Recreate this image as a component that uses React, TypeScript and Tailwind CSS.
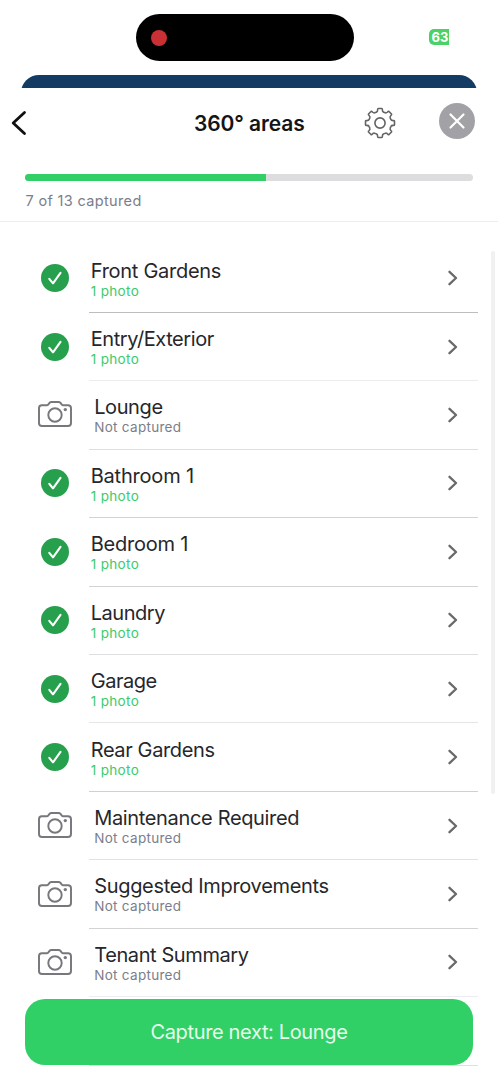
import React from "react";

type Area = { name: string; done: boolean; tracking: string; line: string };

const areas: Area[] = [
  { name: "Front Gardens", done: true, tracking: "tracking-[-0.28px]", line: "bg-[#bdbdbf]" },
  { name: "Entry/Exterior", done: true, tracking: "tracking-[-0.42px]", line: "bg-[#ececee]" },
  { name: "Lounge", done: false, tracking: "tracking-[-0.4px]", line: "bg-[#dedee0]" },
  { name: "Bathroom 1", done: true, tracking: "tracking-[-0.2px]", line: "bg-[#d3d3d5]" },
  { name: "Bedroom 1", done: true, tracking: "tracking-[-0.23px]", line: "bg-[#d3d3d5]" },
  { name: "Laundry", done: true, tracking: "tracking-[-0.45px]", line: "bg-[#dedee0]" },
  { name: "Garage", done: true, tracking: "tracking-[-0.45px]", line: "bg-[#e6e6e8]" },
  { name: "Rear Gardens", done: true, tracking: "tracking-[-0.38px]", line: "bg-[#d0d0d2]" },
  { name: "Maintenance Required", done: false, tracking: "tracking-[-0.34px]", line: "bg-[#e2e2e4]" },
  { name: "Suggested Improvements", done: false, tracking: "tracking-[-0.32px]", line: "bg-[#d3d3d5]" },
  { name: "Tenant Summary", done: false, tracking: "tracking-[-0.4px]", line: "bg-[#ececf2]" },
];

function gearPath(): string {
  const at = (r: number, deg: number) => {
    const t = (deg * Math.PI) / 180;
    return `${(16 + r * Math.sin(t)).toFixed(2)} ${(16 - r * Math.cos(t)).toFixed(2)}`;
  };
  let d = `M${at(14.6, -7)}`;
  for (let i = 0; i < 8; i++) {
    const a = i * 45;
    d += `L${at(14.6, a + 7)}Q${at(14.6, a + 10)} ${at(13.3, a + 10.5)}`;
    d += `Q${at(11.7, a + 12)} ${at(11.5, a + 17)}Q${at(11.3, a + 22.5)} ${at(11.5, a + 28)}`;
    d += `Q${at(11.7, a + 33)} ${at(13.3, a + 34.5)}Q${at(14.6, a + 35)} ${at(14.6, a + 38)}`;
  }
  return d + "Z";
}

function CheckBadge() {
  return (
    <svg className="size-[28px]" viewBox="0 0 28 28" fill="none">
      <circle cx="14" cy="14" r="14" fill="#27a04d" />
      <path d="M8.3 14.8 12 19.3 19.5 8.8" stroke="#fff" strokeWidth="2.1" strokeLinecap="round" strokeLinejoin="round" />
    </svg>
  );
}

function CameraIcon() {
  return (
    <svg className="mb-px h-[28px] w-[36px]" viewBox="0 0 36 28" fill="none" stroke="#77787d" strokeWidth="1.95" strokeLinejoin="round">
      <path d="M4.8 5.2H9.6Q10.7 5.2 11.4 4.3L12.5 2.9Q13.3 1.9 14.5 1.9H21.5Q22.7 1.9 23.5 2.9L24.6 4.3Q25.3 5.2 26.4 5.2H31Q34 5.2 34 8.2V23Q34 26 31 26H5Q2 26 2 23V8.2Q2 5.2 4.8 5.2Z" />
      <circle cx="18" cy="15" r="6.7" />
      <circle cx="28.3" cy="9.6" r="1.7" fill="#77787d" stroke="none" />
    </svg>
  );
}

function AreaRow({ area }: { area: Area }) {
  return (
    <li className="flex h-[68.45px] shrink-0">
      <div className="flex w-[89px] shrink-0 items-center justify-center pb-px pl-[21px]">
        {area.done ? <CheckBadge /> : <CameraIcon />}
      </div>
      <div className="flex w-[389px] flex-col">
        <div className="flex flex-1 items-center justify-between pr-[20.5px]">
          <div className={area.done ? "pl-[1.7px] pt-[0.8px]" : "pl-[5.2px] pt-[0.8px]"}>
            <p className={`whitespace-nowrap text-[20px] leading-[24px] text-[#26272b] ${area.tracking}`}>{area.name}</p>
            <p className={`whitespace-nowrap text-[13.5px] leading-[16px] ${area.done ? "tracking-[0.35px] text-[#3ccb6c]" : "tracking-[0.3px] text-[#7b7e8a]"}`}>
              {area.done ? "1 photo" : "Not captured"}
            </p>
          </div>
          <svg className="h-[16px] w-[10px]" viewBox="0 0 10 16" fill="none">
            <path d="M1.5 1.8 8 8 1.5 14.2" stroke="#6a6a6e" strokeWidth="2.3" strokeLinecap="round" strokeLinejoin="round" />
          </svg>
        </div>
        <div className={`h-px shrink-0 ${area.line}`} />
      </div>
    </li>
  );
}

export default function App() {
  return (
    <div className="relative flex h-[1080px] w-[498px] flex-col overflow-hidden bg-white font-['Inter','Liberation_Sans',sans-serif]">
      <div className="flex h-[75px] shrink-0 items-start pl-[136px] pt-[14px]">
        <div className="flex h-[47px] w-[218px] items-center rounded-full bg-black pl-[15px]">
          <span className="size-[16px] rounded-full bg-[#c93034]" />
        </div>
        <div className="ml-[75px] mt-[15px] flex h-[16px] w-[19.5px] items-center overflow-hidden rounded-l-[5px] bg-[#4bd164] pl-[2.5px]">
          <span className="text-[13px] font-bold leading-none text-white">63</span>
        </div>
      </div>
      <div className="mx-[21px] h-[12.5px] shrink-0 overflow-hidden">
        <div className="h-[40px] rounded-t-[18px] bg-[#143c62]" />
      </div>

      <header className="flex h-[134.5px] shrink-0 flex-col border-b border-[#ededee]">
        <div className="flex h-[70px] items-center pl-[11px] pr-[23px]">
          <svg className="h-[26px] w-[16px]" viewBox="0 0 16 26" fill="none">
            <path d="M13.5 2.5 2.2 13 13.5 23.6" stroke="#111" strokeWidth="2.8" strokeLinecap="round" strokeLinejoin="round" />
          </svg>
          <h1 className="ml-[167px] w-[112px] whitespace-nowrap pt-[2px] text-[21px] font-semibold leading-[28px] tracking-[-0.1px] text-[#151515]">360° areas</h1>
          <svg className="ml-[58px] size-[32px]" viewBox="0 0 32 32" fill="none" stroke="#636366" strokeWidth="1.6" strokeLinejoin="round">
            <path d={gearPath()} />
            <circle cx="16" cy="16" r="5.1" />
          </svg>
          <svg className="ml-auto size-[36px] -translate-y-[2px]" viewBox="0 0 36 36" fill="none">
            <circle cx="18" cy="18" r="18" fill="#a2a2a6" />
            <path d="M11.5 11.5 24.5 24.5M24.5 11.5 11.5 24.5" stroke="#fff" strokeWidth="2.2" strokeLinecap="round" />
          </svg>
        </div>
        <div className="ml-[25px] mt-[16.5px] h-[7px] w-[448px] shrink-0 overflow-hidden rounded-full bg-[#dddddf]">
          <div className="h-full w-[241px] bg-[#32cf66]" />
        </div>
        <p className="ml-[25.5px] mt-[10px] text-[14.5px] leading-[20px] tracking-[0.34px] text-[#7b7e8a]">7 of 13 captured</p>
      </header>

      <ul className="flex flex-col pt-[22.4px]">
        {areas.map((area) => (
          <AreaRow key={area.name} area={area} />
        ))}
        <li className="ml-[89px] mt-[67.5px] h-px w-[389px] bg-[#dedee6]" />
      </ul>

      <div className="absolute right-[3px] top-[251px] h-[543px] w-[4px] rounded-full bg-[#f1f1f2]" />
      <button className="absolute left-[25px] top-[999px] h-[65.5px] w-[448px] rounded-[20px] bg-[#30d066] text-[20px] tracking-[-0.35px] text-[#e6fbec]">
        Capture next: Lounge
      </button>
    </div>
  );
}
